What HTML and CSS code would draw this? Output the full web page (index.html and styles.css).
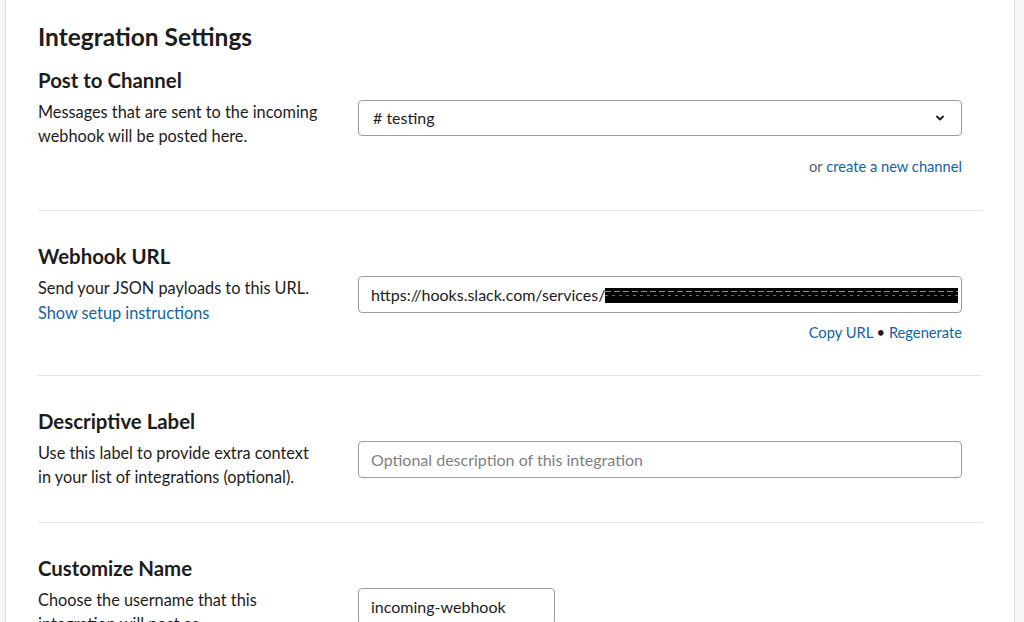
FILE: index.html
```html
<!DOCTYPE html>
<html lang="en">
<head>
<meta charset="utf-8">
<title>Integration Settings</title>
<link rel="stylesheet" href="styles.css">
</head>
<body>
<div class="page">
  <div class="card">
    <h1 class="title">Integration Settings</h1>

    <section class="section first">
      <h2 class="heading">Post to Channel</h2>
      <div class="row">
        <p class="desc">Messages that are sent to the incoming webhook will be posted here.</p>
        <div class="field">
          <div class="select">
            <span># testing</span>
            <svg class="chev" width="10" height="8" viewBox="0 0 10 8"><path d="M2 2.5 L5 5.5 L8 2.5" fill="none" stroke="#1d1c1d" stroke-width="1.8" stroke-linecap="round" stroke-linejoin="round"/></svg>
          </div>
          <div class="hint hint-a"><span class="muted">or</span> <a class="link">create a new channel</a></div>
        </div>
      </div>
    </section>

    <section class="section">
      <h2 class="heading">Webhook URL</h2>
      <div class="row">
        <div class="desc">
          <p>Send your JSON payloads to this URL.</p>
          <a class="link">Show setup instructions</a>
        </div>
        <div class="field">
          <div class="input url"><span>https://hooks.slack.com/services/</span><span class="redact"></span></div>
          <div class="hint hint-b"><a class="link">Copy URL</a> <span class="dot">•</span> <a class="link">Regenerate</a></div>
        </div>
      </div>
    </section>

    <section class="section">
      <h2 class="heading">Descriptive Label</h2>
      <div class="row">
        <p class="desc">Use this label to provide extra context in your list of integrations (optional).</p>
        <div class="field">
          <div class="input placeholder">Optional description of this integration</div>
        </div>
      </div>
    </section>

    <section class="section">
      <h2 class="heading">Customize Name</h2>
      <div class="row">
        <p class="desc">Choose the username that this integration will post as.</p>
        <div class="field">
          <div class="input short">incoming-webhook</div>
        </div>
      </div>
    </section>
  </div>
</div>
</body>
</html>
```

FILE: styles.css
```css
html, body {
  margin: 0;
  padding: 0;
  background: #f7f7f7;
  height: 100%;
  overflow: hidden;
}
body {
  font-family: Lato, "Noto Sans", sans-serif;
  color: #1d1c1d;
}
.page {
  padding-left: 5px;
}
.card {
  box-sizing: border-box;
  width: 1010px;
  min-height: 700px;
  background: #ffffff;
  border-left: 1px solid #dedede;
  border-right: 1px solid #dedede;
  padding: 21px 32px 0 32px;
}
.title {
  margin: 0 0 13px 0;
  font-size: 24.5px;
  line-height: 32px;
  font-weight: 700;
}
.section {
  border-top: 1px solid #e3e3e3;
  padding: 31px 0 33px 0;
}
.section.first {
  border-top: none;
  padding-top: 0;
  padding-bottom: 34px;
}
.heading {
  margin: 0 0 6px 0;
  font-size: 20.4px;
  line-height: 28px;
  font-weight: 700;
}
.row {
  display: flex;
  gap: 40px;
}
.desc {
  width: 280px;
  flex: none;
  margin: 0;
  font-size: 16.3px;
  line-height: 24px;
  color: #1d1c1d;
}
.desc p {
  margin: 0;
}
.desc .link {
  line-height: 25px;
  display: block;
}
.field {
  width: 604px;
  flex: none;
}
.select, .input {
  box-sizing: border-box;
  height: 37px;
  border: 1px solid #9d9d9d;
  border-radius: 4px;
  font-size: 16px;
  line-height: 35px;
  background: #fff;
}
.select {
  height: 36px;
  line-height: 34px;
  display: flex;
  align-items: center;
  justify-content: space-between;
  padding: 0 16px 0 14px;
}
.chev {
  display: block;
}
.input {
  padding: 0 12px;
  white-space: nowrap;
  overflow: hidden;
}
.url {
  display: flex;
  align-items: center;
}
.redact {
  display: inline-block;
  width: 353px;
  height: 15px;
  flex: none;
  margin-top: 1px;
  background:
    repeating-linear-gradient(90deg, #8a8a8a 0 6px, transparent 6px 9px) 0 3px / 100% 1px no-repeat,
    repeating-linear-gradient(90deg, #6a6a6a 0 3px, transparent 3px 7px) 0 7px / 100% 1px no-repeat,
    #000;
}
.placeholder {
  color: #808080;
}
.short {
  width: 197px;
}
.hint {
  text-align: right;
  font-size: 14.7px;
  line-height: 20px;
}
.hint-a {
  margin-top: 20px;
}
.hint-b {
  margin-top: 9px;
}
.muted {
  color: #616061;
}
.dot {
  color: #1d1c1d;
}
.link {
  color: #1264a3;
  text-decoration: none;
  cursor: pointer;
}
```
